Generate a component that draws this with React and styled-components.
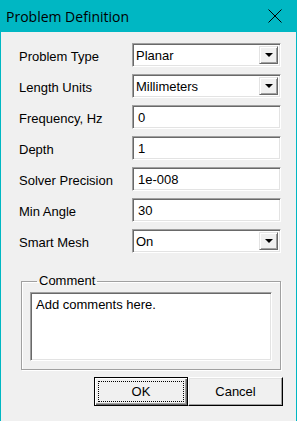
import React from 'react';
import styled, { createGlobalStyle } from 'styled-components';

const GlobalStyle = createGlobalStyle`
    html, body {
        margin: 0;
        padding: 0;
        background: #f0f0f0;
    }
    * {
        box-sizing: border-box;
    }
`;

const Window = styled.div`
    width: 297px;
    height: 421px;
    display: flex;
    flex-direction: column;
    background: #f0f0f0;
    border-left: 1px solid #00b7c3;
    border-right: 1px solid #00b7c3;
    font-family: "Liberation Sans", Arial, sans-serif;
    font-size: 13px;
    color: #000;
`;

const TitleBar = styled.div`
    height: 32px;
    flex-shrink: 0;
    display: flex;
    align-items: center;
    justify-content: space-between;
    background: #00b7c3;
    padding: 0 14px 0 5px;
`;

const Title = styled.span`
    font-family: "Open Sans", "Noto Sans", sans-serif;
    font-size: 14px;
    color: #000;
`;

const CloseButton = styled.svg`
    width: 14px;
    height: 14px;
    display: block;
`;

const Body = styled.div`
    padding: 11px 13px 0 18px;
    display: flex;
    flex-direction: column;
`;

const Form = styled.div`
    display: grid;
    grid-template-columns: 113px 149px;
    row-gap: 7px;
    align-items: center;
`;

const Label = styled.span`
    padding-top: 3px;
    line-height: 16px;
`;

const sunken = `
    background: #fff;
    border-top: 1px solid #a0a0a0;
    border-left: 1px solid #a0a0a0;
    border-bottom: 1px solid #fff;
    border-right: 1px solid #fff;
    box-shadow: inset 1px 1px 0 #696969, inset -1px -1px 0 #e3e3e3;
`;

const TextBox = styled.div`
    ${sunken}
    height: 24px;
    display: flex;
    align-items: center;
    padding: 0 5px;
`;

const Select = styled.div`
    ${sunken}
    height: 24px;
    display: flex;
    align-items: center;
    padding: 2px 2px 2px 3px;
`;

const SelectValue = styled.span`
    flex: 1;
`;

const DropButton = styled.div`
    width: 19px;
    height: 100%;
    display: flex;
    align-items: center;
    justify-content: center;
    background: #f0f0f0;
    border-top: 1px solid #e3e3e3;
    border-left: 1px solid #e3e3e3;
    border-bottom: 1px solid #696969;
    border-right: 1px solid #696969;
    box-shadow: inset 1px 1px 0 #fff, inset -1px -1px 0 #a0a0a0;
`;

const Arrow = styled.span`
    width: 0;
    height: 0;
    border-left: 4px solid transparent;
    border-right: 4px solid transparent;
    border-top: 4px solid #000;
`;

const Group = styled.fieldset`
    margin: 20px 0 0 2px;
    width: 260px;
    padding: 3px 8px 8px 8px;
    border: 1px solid #a0a0a0;
    box-shadow: inset 1px 1px 0 #fff, 1px 1px 0 #fff;
`;

const Legend = styled.legend`
    padding: 0 2px;
    margin-left: 7px;
    line-height: 16px;
`;

const CommentBox = styled.div`
    ${sunken}
    width: 242px;
    height: 69px;
    padding: 4px 5px;
    line-height: 16px;
`;

const ButtonRow = styled.div`
    display: flex;
    justify-content: flex-end;
    margin-top: 7px;
`;

const Button = styled.div`
    width: ${(p) => p.$width}px;
    height: 29px;
    display: flex;
    align-items: center;
    justify-content: center;
    background: #f0f0f0;
    border: 1px solid ${(p) => (p.$default ? '#000' : '#fff')};
    border-right-color: #000;
    border-bottom-color: #000;
    box-shadow: ${(p) => (p.$default
        ? 'inset 1px 1px 0 #fff, inset -1px -1px 0 #696969, inset -2px -2px 0 #a0a0a0'
        : 'inset -1px -1px 0 #a0a0a0, inset 1px 1px 0 #e3e3e3')};
`;

const Focus = styled.span`
    flex: 1;
    align-self: stretch;
    margin: 4px;
    display: flex;
    align-items: center;
    justify-content: center;
    outline: 1px dotted #000;
`;

const Dropdown = ({ value }) => (
    <Select>
        <SelectValue>{value}</SelectValue>
        <DropButton>
            <Arrow />
        </DropButton>
    </Select>
);

const App = () => {
    const rows = [
        { label: 'Problem Type', value: 'Planar', select: true },
        { label: 'Length Units', value: 'Millimeters', select: true },
        { label: 'Frequency, Hz', value: '0' },
        { label: 'Depth', value: '1' },
        { label: 'Solver Precision', value: '1e-008' },
        { label: 'Min Angle', value: '30' },
        { label: 'Smart Mesh', value: 'On', select: true },
    ];

    return (
        <>
            <GlobalStyle />
            <Window>
                <TitleBar>
                    <Title>Problem Definition</Title>
                    <CloseButton viewBox="0 0 14 14">
                        <path d="M0.5 0.5 L13.5 13.5 M13.5 0.5 L0.5 13.5" stroke="#000" strokeWidth="1" />
                    </CloseButton>
                </TitleBar>
                <Body>
                    <Form>
                        {rows.map((row) => (
                            <React.Fragment key={row.label}>
                                <Label>{row.label}</Label>
                                {row.select ? (
                                    <Dropdown value={row.value} />
                                ) : (
                                    <TextBox>{row.value}</TextBox>
                                )}
                            </React.Fragment>
                        ))}
                    </Form>
                    <Group>
                        <Legend>Comment</Legend>
                        <CommentBox>Add comments here.</CommentBox>
                    </Group>
                    <ButtonRow>
                        <Button $width={94} $default>
                            <Focus>OK</Focus>
                        </Button>
                        <Button $width={95}>Cancel</Button>
                    </ButtonRow>
                </Body>
            </Window>
        </>
    );
};

export default App;
